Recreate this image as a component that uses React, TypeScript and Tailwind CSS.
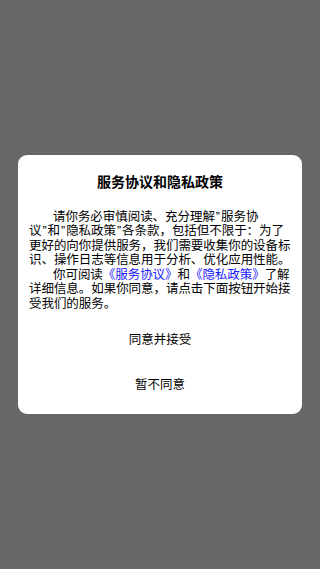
export default function App() {
  const font = { fontFamily: '"Liberation Sans", "Noto Sans CJK SC", sans-serif' };
  return (
    <div className="w-[320px] h-[569px] bg-[#676767] flex items-center justify-center" style={font}>
      <div className="w-[284px] bg-white rounded-[9px] pt-[17px] pb-[6px] px-[11px]">
        <h2 className="text-center text-[14px] leading-[20px] font-bold text-black">服务协议和隐私政策</h2>
        <div className="mt-[18px] text-[12.5px] leading-[14.5px] text-black whitespace-nowrap tracking-[-0.05px]">
          <p>
            <span className="inline-block w-[24px]" />请你务必审慎阅读、充分理解<span className="mx-[1px]">”</span>服务协<br />
            议<span className="mx-[1px]">”</span>和<span className="mx-[1px]">”</span>隐私政策<span className="mx-[1px]">”</span>各条款，包括但不限于：为了<br />
            更好的向你提供服务，我们需要收集你的设备标<br />
            识、操作日志等信息用于分析、优化应用性能。
          </p>
          <p>
            <span className="inline-block w-[24px]" />你可阅读<span className="text-[#2020ff]">《服务协议》</span>和<span className="text-[#2020ff]">《隐私政策》</span>了解<br />
            详细信息。如果你同意，请点击下面按钮开始接<br />
            受我们的服务。
          </p>
        </div>
        <div className="mt-[7px] flex flex-col">
          <button className="h-[45px] text-[12.5px] text-black text-center">同意并接受</button>
          <button className="h-[45px] text-[12.5px] text-black text-center">暂不同意</button>
        </div>
      </div>
    </div>
  );
}
